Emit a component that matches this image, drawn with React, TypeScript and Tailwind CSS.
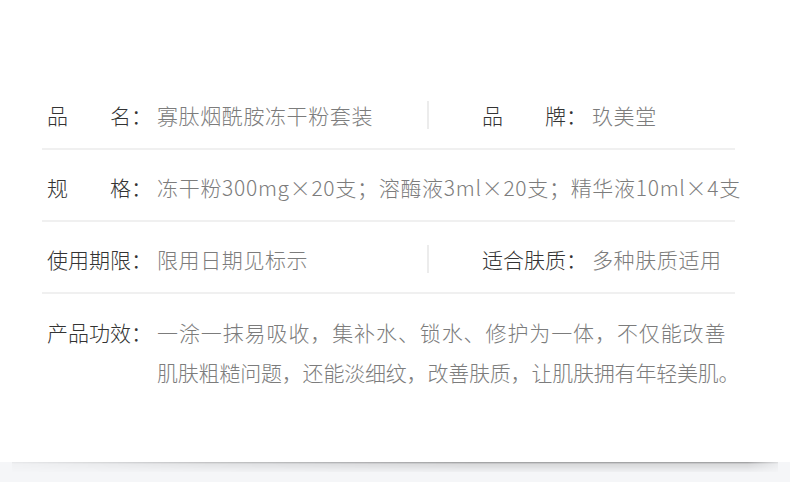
import React from "react";

const FONT = "font-['Noto_Sans_CJK_SC','Noto_Sans',sans-serif]";

interface FieldProps {
  label: string[];
  value: React.ReactNode;
}

// label: the characters are spread over a 4-character box, then the colon
const Field: React.FC<FieldProps> = ({ label, value }) => (
  <div className="flex items-center whitespace-nowrap">
    <div className="flex w-[84px] shrink-0 justify-between text-[#333]">
      {label.map((ch, i) => (
        <span key={i}>{ch}</span>
      ))}
    </div>
    <span className="w-[26px] shrink-0 text-[#333]">：</span>
    <span className="tracking-[0.6px] text-[#7c7c7c]">{value}</span>
  </div>
);

const Row: React.FC<{ children: React.ReactNode }> = ({ children }) => (
  <div className="flex items-center border-b-2 border-[#f0f0f0] pl-[5px] pt-[22px] pb-[18px]">
    {children}
  </div>
);

const Split: React.FC<{ left: FieldProps; right: FieldProps }> = ({ left, right }) => (
  <Row>
    <div className="w-[380px]">
      <Field {...left} />
    </div>
    <div className="h-[28px] w-[2px] bg-[#ececec]" />
    <div className="pl-[53px]">
      <Field {...right} />
    </div>
  </Row>
);

export default function App() {
  return (
    <div className={`w-[790px] h-[482px] bg-[#f5f6f8] font-light ${FONT}`}>
      <div className="h-[462px] bg-white pt-[78px]">
        <div className="ml-[42px] w-[693px] text-[21px] leading-[30px]">
          <Split
            left={{ label: ["品", "名"], value: "寡肽烟酰胺冻干粉套装" }}
            right={{ label: ["品", "牌"], value: "玖美堂" }}
          />
          <Row>
            <Field
              label={["规", "格"]}
              value={<span className="tracking-[0.7px]">冻干粉300mg×20支；溶酶液3ml×20支；精华液10ml×4支</span>}
            />
          </Row>
          <Split
            left={{ label: ["使", "用", "期", "限"], value: "限用日期见标示" }}
            right={{ label: ["适", "合", "肤", "质"], value: "多种肤质适用" }}
          />
          <div className="flex pl-[5px] pt-[18px] leading-[40px] whitespace-nowrap">
            <div className="w-[84px] shrink-0 text-[#333]">产品功效</div>
            <span className="w-[26px] shrink-0 text-[#333]">：</span>
            <div className="text-[#7c7c7c]">
              <div className="tracking-[0.9px]">一涂一抹易吸收，集补水、锁水、修护为一体，不仅能改善</div>
              <div className="tracking-[-0.2px]">肌肤粗糙问题，还能淡细纹，改善肤质，让肌肤拥有年轻美肌。</div>
            </div>
          </div>
        </div>
      </div>
      <div className="px-[12px]">
        <div className="h-[10px] bg-[linear-gradient(to_bottom,rgba(0,0,0,0.4),rgba(0,0,0,0.12)_20%,rgba(0,0,0,0.02))] [mask-image:linear-gradient(to_right,rgba(0,0,0,0.15),rgba(0,0,0,0.6)_25%,black_60%,black_96%,rgba(0,0,0,0.3))]" />
      </div>
    </div>
  );
}
